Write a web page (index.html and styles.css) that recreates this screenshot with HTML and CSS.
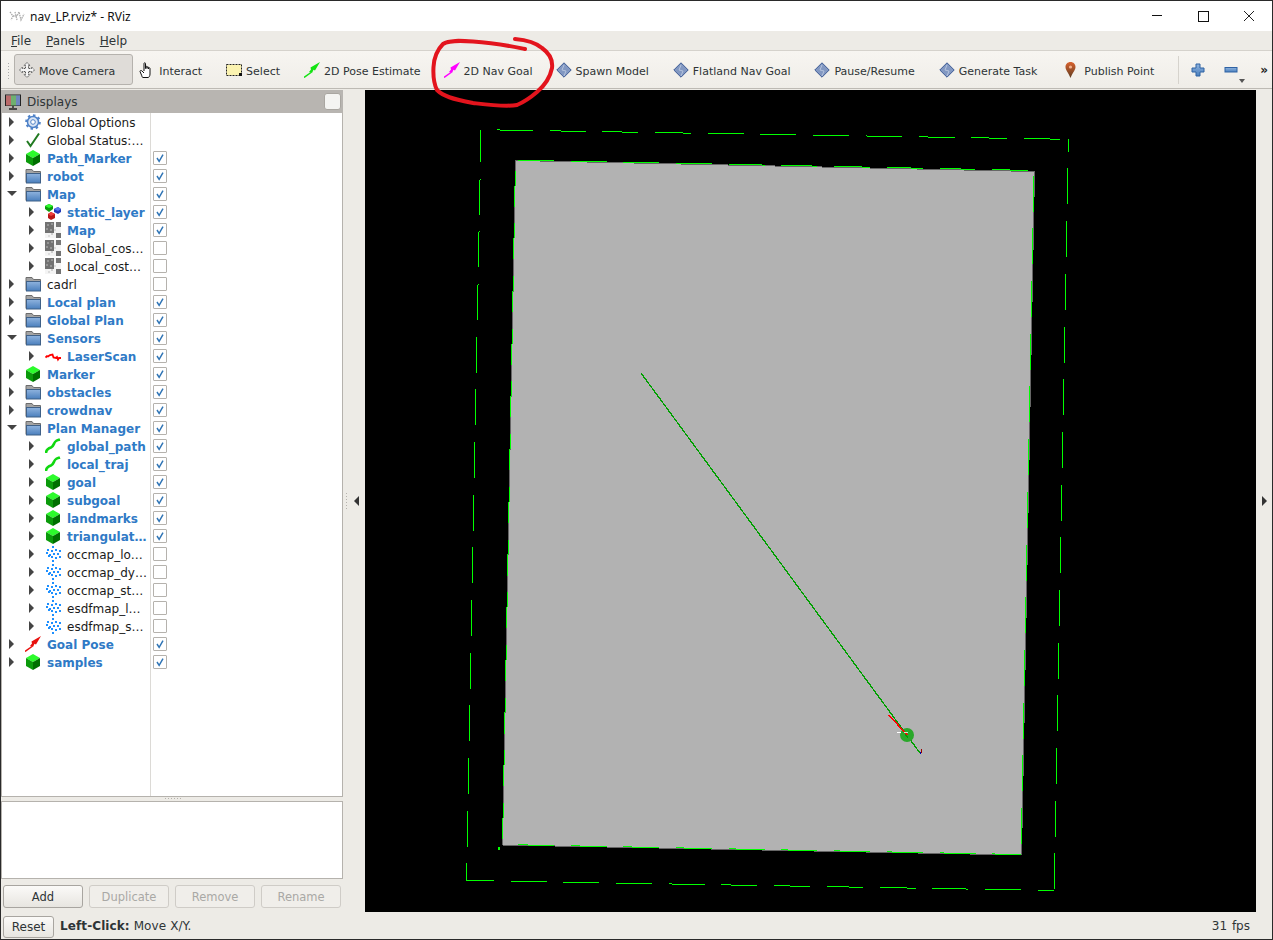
FILE: index.html
```html
<!DOCTYPE html>
<html lang="en">
<head>
	<meta charset="UTF-8">
	<title>nav_LP.rviz* - RViz</title>
	<link rel="stylesheet" href="styles.css">
</head>
<body>
	<svg class="defs" width="0" height="0">
		<defs>
			<linearGradient id="blue" x1="0" y1="0" x2="0" y2="1"><stop offset="0" stop-color="#8fb3de"/><stop offset="1" stop-color="#4a7fbd"/></linearGradient>
			<linearGradient id="pinfill" x1="0" y1="0" x2="0" y2="1"><stop offset="0" stop-color="#d9622e"/><stop offset="1" stop-color="#5f3d22"/></linearGradient>
			<symbol id="cube" viewBox="0 0 16 16"><polygon points="8,0 15,4 8,8 1,4" fill="#2cfb2c"/><polygon points="1,4 8,8 8,16 1,12" fill="#0b9a0b"/><polygon points="15,4 8,8 8,16 15,12" fill="#006f00"/></symbol>
			<symbol id="folder" viewBox="0 0 16 16"><path d="M1 1.500h6l1.500 2h7v11H1z" fill="#a3a3a3" stroke="#6c6c6c"/><rect x="1.500" y="5.500" width="14" height="9.500" fill="url(#blue)" stroke="#3f6087"/></symbol>
			<symbol id="gear" viewBox="0 0 16 16"><circle cx="8" cy="8" r="5.500" fill="#dbe6f5" stroke="#4f82c8" stroke-width="1.500"/><circle cx="8" cy="8" r="6.800" fill="none" stroke="#4f82c8" stroke-width="2" stroke-dasharray="2.500 2.800"/><circle cx="8" cy="8" r="2.300" fill="#fff" stroke="#4f82c8"/></symbol>
			<symbol id="ok" viewBox="0 0 16 16"><path d="M2 9l3.500 5L14 1.500" fill="none" stroke="#217a21" stroke-width="2"/></symbol>
			<symbol id="cubes" viewBox="0 0 16 16"><polygon points="4,0 8,2 8,5 4,8 0,5 0,2" fill="#0c9c0c"/><polygon points="4,0 8,2 4,4 0,2" fill="#2cfb2c"/><polygon points="13,3 16,5 16,8 13,10 9,8 9,5" fill="#2339b8"/><polygon points="13,3 16,5 13,7 9,5" fill="#5a78f0"/><polygon points="6,8 10,10 10,14 6,16 3,14 3,10" fill="#b81616"/><polygon points="6,8 10,10 6,12 3,10" fill="#f04040"/></symbol>
			<symbol id="map" viewBox="0 0 16 16"><rect width="16" height="16" fill="#f4f4f4"/><rect width="9" height="11" fill="#727272"/><rect x="2" y="2" width="2" height="2" fill="#969696"/><rect x="6" y="1" width="2" height="2" fill="#969696"/><rect x="1" y="6" width="2" height="2" fill="#969696"/><rect x="5" y="7" width="2" height="2" fill="#969696"/><rect x="11" width="5" height="5" fill="#777"/><rect x="11" y="11" width="5" height="5" fill="#727272"/><rect x="6" y="11" width="2" height="2" fill="#cfcfcf"/><rect x="3" y="13" width="2" height="2" fill="#dcdcdc"/><rect x="9" y="7" width="2" height="2" fill="#dcdcdc"/></symbol>
			<symbol id="scan" viewBox="0 0 16 16"><path d="M0.500 9.500L2 8l1 .5L5 7l2.500-.5 1 3 2.500.5 1-1 1 2.500 1-1.500H16" fill="none" stroke="#f00" stroke-width="1.800"/></symbol>
			<symbol id="path" viewBox="0 0 16 16"><path d="M1 15c0-3 2-4.500 5-5.500 3-1 2.500-5 5-6.500 1.200-.8 2.500-1 4-1.500" fill="none" stroke="#10d810" stroke-width="2.600"/></symbol>
			<symbol id="dots" viewBox="0 0 16 16"><g fill="#1e90ff"><rect x="7" y="0" width="2" height="2"/><rect x="2" y="3" width="2" height="2"/><rect x="6" y="4" width="2" height="2"/><rect x="10" y="3" width="2" height="2"/><rect x="14" y="4" width="2" height="2"/><rect x="1" y="6" width="2" height="2"/><rect x="4" y="8" width="2" height="2"/><rect x="8" y="7" width="2" height="2"/><rect x="12" y="7" width="2" height="2"/><rect x="3" y="9" width="2" height="2"/><rect x="6" y="10" width="2" height="2"/><rect x="14" y="10" width="2" height="2"/><rect x="10" y="11" width="2" height="2"/><rect x="7" y="14" width="2" height="2"/></g></symbol>
			<symbol id="arrow" viewBox="0 0 16 16"><path d="M0 15.500L7 10.500" fill="none" stroke="currentColor" stroke-width="1.500"/><polygon points="16,0 11,8.500 9.500,7.800 8,11 5,10 7,7.500 6.500,5.500" fill="currentColor"/></symbol>
			<symbol id="diamond" viewBox="0 0 16 16"><polygon points="8,0.800 15.200,8 8,15.200 0.800,8" fill="#8298c2" stroke="#3d5a94"/><path d="M8 3l-2 5 4 1-2 5" fill="none" stroke="#b5c3dd"/></symbol>
			<symbol id="pin" viewBox="0 0 16 16"><path d="M8 0c3 0 5 2.200 5 5 0 3-3 6-5 11-2-5-5-8-5-11 0-2.800 2-5 5-5z" fill="url(#pinfill)"/><circle cx="8" cy="5" r="1.600" fill="#f3b08c"/></symbol>
			<symbol id="tick" viewBox="0 0 14 14"><path d="M3.500 7l2.500 4L10.500 3" fill="none" stroke="#2f74b5" stroke-width="1.700"/></symbol>
		</defs>
	</svg>

	<div class="window">
		<div class="titlebar">
			<svg class="appicon" viewBox="0 0 16 12"><path d="M1 2l3 4-2 4M4 6h4l2-4 2 8 3-6M6 2l2 8" fill="none" stroke="#aaa" stroke-width="1.300" stroke-dasharray="1.500 .8"/></svg>
			<span class="title">nav_LP.rviz* - RViz</span>
			<div class="winbtns">
				<svg viewBox="0 0 12 12"><path d="M1 5.500h10" stroke="#111" fill="none"/></svg>
				<svg viewBox="0 0 12 12"><rect x="1.500" y="1.500" width="10" height="10" stroke="#111" fill="none"/></svg>
				<svg viewBox="0 0 12 12"><path d="M1 1l10 10M11 1L1 11" stroke="#222" fill="none"/></svg>
			</div>
		</div>

		<div class="menubar">
			<span><u>F</u>ile</span>
			<span><u>P</u>anels</span>
			<span><u>H</u>elp</span>
		</div>

		<div class="toolbar">
			<div class="grip"></div>
			<div class="tool active">
				<svg class="ico" viewBox="0 0 16 16"><path d="M8 .5l3 3H9.500v3h3V5l3 3-3 3V9.500h-3v3H11l-3 3-3-3h1.500v-3h-3V11l-3-3 3-3v1.500h3v-3H5z" fill="#f4f4f4" stroke="#555" stroke-dasharray="1.500 .7"/></svg>
				<span>Move Camera</span>
			</div>
			<div class="tool">
				<svg class="ico" viewBox="0 0 16 16"><path d="M5 9V1.500c0-1 1.500-1 1.500 0V6.500 5c0-1 1.500-1 1.500 0v1.500-1c0-1 1.500-1 1.500 0v1.500-.5c0-1 1.500-1 1.500 0V12c0 2-1 3.500-2 3.500H4c-1 0-1-1.500-1.500-2.500L1 9.500c0-1 1-1.500 2-.5l2 2" fill="#fff" stroke="#111" stroke-width="1"/></svg>
				<span>Interact</span>
			</div>
			<div class="tool">
				<svg class="ico" viewBox="0 0 16 16"><rect x=".5" y="2.500" width="15" height="11" fill="#fbf3b0" stroke="#222" stroke-dasharray="2 1"/><rect x="13" y="11" width="3" height="3" fill="#111"/></svg>
				<span>Select</span>
			</div>
			<div class="tool">
				<svg class="ico pose-green"><use href="#arrow"/></svg>
				<span>2D Pose Estimate</span>
			</div>
			<div class="tool tight">
				<svg class="ico pose-pink"><use href="#arrow"/></svg>
				<span>2D Nav Goal</span>
			</div>
			<div class="tool tight"><svg class="ico"><use href="#diamond"/></svg><span>Spawn Model</span></div>
			<div class="tool"><svg class="ico"><use href="#diamond"/></svg><span>Flatland Nav Goal</span></div>
			<div class="tool"><svg class="ico"><use href="#diamond"/></svg><span>Pause/Resume</span></div>
			<div class="tool"><svg class="ico"><use href="#diamond"/></svg><span>Generate Task</span></div>
			<div class="tool"><svg class="ico pin-ico"><use href="#pin"/></svg><span>Publish Point</span></div>
			<div class="tool-sep"></div>
			<svg class="ico zoom-ico" viewBox="0 0 16 16"><path d="M6 2h4v4h4v4h-4v4H6v-4H2V6h4z" fill="url(#blue)" stroke="#2f62a3"/></svg>
			<div class="minus-wrap">
				<svg class="ico" viewBox="0 0 16 16"><rect x="2" y="5.500" width="12" height="4.500" fill="url(#blue)" stroke="#2f62a3"/></svg>
				<i class="drop"></i>
			</div>
			<span class="more">»</span>
		</div>

		<div class="main">
			<div class="side">
				<div class="panel-head">
					<svg class="ico" viewBox="0 0 16 16"><rect x=".5" y="1" width="15" height="10.500" fill="#8aa" stroke="#222"/><rect x="1" y="1.500" width="5" height="10" fill="#b96a6a"/><rect x="6" y="1.500" width="5" height="10" fill="#6fb06f"/><rect x="11" y="1.500" width="4" height="10" fill="#6f86bf"/><path d="M8 12v2M4 15h8" stroke="#222" stroke-width="1.400"/></svg>
					<span class="panel-name">Displays</span>
					<span class="head-box"></span>
				</div>
				<div class="tree">
					<div class="row"><div class="name"><i class="tw"></i><svg class="ico"><use href="#gear"/></svg><span>Global Options</span></div><div class="cell"></div></div>
					<div class="row"><div class="name"><i class="tw"></i><svg class="ico"><use href="#ok"/></svg><span>Global Status:…</span></div><div class="cell"></div></div>
					<div class="row"><div class="name"><i class="tw"></i><svg class="ico"><use href="#cube"/></svg><span class="on">Path_Marker</span></div><div class="cell"><span class="box"><svg><use href="#tick"/></svg></span></div></div>
					<div class="row"><div class="name"><i class="tw"></i><svg class="ico"><use href="#folder"/></svg><span class="on">robot</span></div><div class="cell"><span class="box"><svg><use href="#tick"/></svg></span></div></div>
					<div class="row"><div class="name"><i class="tw open"></i><svg class="ico"><use href="#folder"/></svg><span class="on">Map</span></div><div class="cell"><span class="box"><svg><use href="#tick"/></svg></span></div></div>
					<div class="row"><div class="name sub"><i class="tw"></i><svg class="ico"><use href="#cubes"/></svg><span class="on">static_layer</span></div><div class="cell"><span class="box"><svg><use href="#tick"/></svg></span></div></div>
					<div class="row"><div class="name sub"><i class="tw"></i><svg class="ico"><use href="#map"/></svg><span class="on">Map</span></div><div class="cell"><span class="box"><svg><use href="#tick"/></svg></span></div></div>
					<div class="row"><div class="name sub"><i class="tw"></i><svg class="ico"><use href="#map"/></svg><span>Global_cos…</span></div><div class="cell"><span class="box"></span></div></div>
					<div class="row"><div class="name sub"><i class="tw"></i><svg class="ico"><use href="#map"/></svg><span>Local_cost…</span></div><div class="cell"><span class="box"></span></div></div>
					<div class="row"><div class="name"><i class="tw"></i><svg class="ico"><use href="#folder"/></svg><span>cadrl</span></div><div class="cell"><span class="box"></span></div></div>
					<div class="row"><div class="name"><i class="tw"></i><svg class="ico"><use href="#folder"/></svg><span class="on">Local plan</span></div><div class="cell"><span class="box"><svg><use href="#tick"/></svg></span></div></div>
					<div class="row"><div class="name"><i class="tw"></i><svg class="ico"><use href="#folder"/></svg><span class="on">Global Plan</span></div><div class="cell"><span class="box"><svg><use href="#tick"/></svg></span></div></div>
					<div class="row"><div class="name"><i class="tw open"></i><svg class="ico"><use href="#folder"/></svg><span class="on">Sensors</span></div><div class="cell"><span class="box"><svg><use href="#tick"/></svg></span></div></div>
					<div class="row"><div class="name sub"><i class="tw"></i><svg class="ico"><use href="#scan"/></svg><span class="on">LaserScan</span></div><div class="cell"><span class="box"><svg><use href="#tick"/></svg></span></div></div>
					<div class="row"><div class="name"><i class="tw"></i><svg class="ico"><use href="#cube"/></svg><span class="on">Marker</span></div><div class="cell"><span class="box"><svg><use href="#tick"/></svg></span></div></div>
					<div class="row"><div class="name"><i class="tw"></i><svg class="ico"><use href="#folder"/></svg><span class="on">obstacles</span></div><div class="cell"><span class="box"><svg><use href="#tick"/></svg></span></div></div>
					<div class="row"><div class="name"><i class="tw"></i><svg class="ico"><use href="#folder"/></svg><span class="on">crowdnav</span></div><div class="cell"><span class="box"><svg><use href="#tick"/></svg></span></div></div>
					<div class="row"><div class="name"><i class="tw open"></i><svg class="ico"><use href="#folder"/></svg><span class="on">Plan Manager</span></div><div class="cell"><span class="box"><svg><use href="#tick"/></svg></span></div></div>
					<div class="row"><div class="name sub"><i class="tw"></i><svg class="ico"><use href="#path"/></svg><span class="on">global_path</span></div><div class="cell"><span class="box"><svg><use href="#tick"/></svg></span></div></div>
					<div class="row"><div class="name sub"><i class="tw"></i><svg class="ico"><use href="#path"/></svg><span class="on">local_traj</span></div><div class="cell"><span class="box"><svg><use href="#tick"/></svg></span></div></div>
					<div class="row"><div class="name sub"><i class="tw"></i><svg class="ico"><use href="#cube"/></svg><span class="on">goal</span></div><div class="cell"><span class="box"><svg><use href="#tick"/></svg></span></div></div>
					<div class="row"><div class="name sub"><i class="tw"></i><svg class="ico"><use href="#cube"/></svg><span class="on">subgoal</span></div><div class="cell"><span class="box"><svg><use href="#tick"/></svg></span></div></div>
					<div class="row"><div class="name sub"><i class="tw"></i><svg class="ico"><use href="#cube"/></svg><span class="on">landmarks</span></div><div class="cell"><span class="box"><svg><use href="#tick"/></svg></span></div></div>
					<div class="row"><div class="name sub"><i class="tw"></i><svg class="ico"><use href="#cube"/></svg><span class="on">triangulat…</span></div><div class="cell"><span class="box"><svg><use href="#tick"/></svg></span></div></div>
					<div class="row"><div class="name sub"><i class="tw"></i><svg class="ico"><use href="#dots"/></svg><span>occmap_lo…</span></div><div class="cell"><span class="box"></span></div></div>
					<div class="row"><div class="name sub"><i class="tw"></i><svg class="ico"><use href="#dots"/></svg><span>occmap_dy…</span></div><div class="cell"><span class="box"></span></div></div>
					<div class="row"><div class="name sub"><i class="tw"></i><svg class="ico"><use href="#dots"/></svg><span>occmap_st…</span></div><div class="cell"><span class="box"></span></div></div>
					<div class="row"><div class="name sub"><i class="tw"></i><svg class="ico"><use href="#dots"/></svg><span>esdfmap_l…</span></div><div class="cell"><span class="box"></span></div></div>
					<div class="row"><div class="name sub"><i class="tw"></i><svg class="ico"><use href="#dots"/></svg><span>esdfmap_s…</span></div><div class="cell"><span class="box"></span></div></div>
					<div class="row"><div class="name"><i class="tw"></i><svg class="ico pose-red"><use href="#arrow"/></svg><span class="on">Goal Pose</span></div><div class="cell"><span class="box"><svg><use href="#tick"/></svg></span></div></div>
					<div class="row"><div class="name"><i class="tw"></i><svg class="ico"><use href="#cube"/></svg><span class="on">samples</span></div><div class="cell"><span class="box"><svg><use href="#tick"/></svg></span></div></div>
					<div class="row filler"><div class="name"></div><div class="cell"></div></div>
				</div>
				<div class="handle"></div>
				<div class="desc"></div>
				<div class="side-btns">
					<button class="btn">Add</button>
					<button class="btn off">Duplicate</button>
					<button class="btn off">Remove</button>
					<button class="btn off">Rename</button>
				</div>
			</div>

			<div class="split"><i class="grip-v"></i><i class="tri-left"></i></div>

			<svg class="view" viewBox="365 90 891 822" width="891" height="822" shape-rendering="crispEdges">
				<rect x="365" y="90" width="891" height="822" fill="#000"/>
				<polygon class="map-fill" points="515.500,160.500 1034.500,171.500 1021.500,855 502.500,845"/>
				<!-- walls: dashes run round both rectangles -->
				<line class="wall d1" x1="481" y1="129.700" x2="1068.500" y2="139.300"/>
				<line class="wall d2" x1="1068.500" y1="139.300" x2="1054" y2="891"/>
				<line class="wall d3" x1="466" y1="880.500" x2="1054" y2="890.500"/>
				<line class="wall d4" x1="466.500" y1="880.500" x2="481" y2="129.700"/>
				<line class="wall d5" x1="515" y1="160" x2="1034.500" y2="170.500"/>
				<line class="wall d6" x1="1034" y1="171" x2="1021" y2="855"/>
				<line class="wall d7" x1="502" y1="844.500" x2="1021" y2="854.500"/>
				<line class="wall d8" x1="502.500" y1="845" x2="515.500" y2="160"/>
				<rect x="498" y="847" width="2" height="3" fill="#0f0"/>
				<!-- robot path and goal -->
				<line class="track" x1="641" y1="373" x2="920" y2="753"/>
				<circle cx="907" cy="735" r="7" fill="#2aa82a" shape-rendering="auto"/>
				<line class="track" x1="905" y1="734" x2="908" y2="738"/>
				<line class="heading" x1="889" y1="715" x2="907" y2="735"/>
				<rect x="897" y="732" width="4" height="1" fill="#fff"/>
				<rect x="904" y="732" width="4" height="1" fill="#cfe9cf"/>
				<rect x="921" y="749" width="1" height="4" fill="#900"/>
				<rect x="920" y="752" width="1" height="2" fill="#00a"/>
			</svg>

			<div class="split-r"><i class="tri-right"></i></div>
		</div>

		<div class="statusbar">
			<button class="btn reset">Reset</button>
			<span class="hint"><b>Left-Click:</b> Move X/Y.</span>
			<span class="fps">31 fps</span>
		</div>

		<!-- red marker scribble over the toolbar -->
		<svg class="scribble" viewBox="0 0 1273 940" width="1273" height="940"><path d="M525 49C510 46 497 43 473 41.500 460 40.500 449 40 443 44 437 50 434 58 433.500 67 433 76 434 84 437 90 443 96 452 99 473 103 490 105 505 107 517 105 524 102 530 98 537 92 544 86 550 78 552 68 553 60 549 53 542 48 535 42 527 40 515 39" fill="none" stroke="#e3141d" stroke-width="4" stroke-linecap="round"/></svg>
	</div>
</body>
</html>
```

FILE: styles.css
```css
*{
	margin:0;
	padding:0;
	box-sizing:border-box;
}
html,body{
	height:100%;
	overflow:hidden;
}
body{
	background-color:#edebe6;
	font-family:"DejaVu Sans",sans-serif;
	font-size:11.500px;
	color:#2e3436;
}
.defs{
	position:absolute;
}
.window{
	height:940px;
	display:flex;
	flex-direction:column;
	border:1px solid #2a2a2a;
	position:relative;
}
.ico{
	width:16px;
	height:16px;
	flex:none;
	display:block;
}
.pose-green{color:#13e313;}
.pose-pink{color:#f0f;}
.pose-red{color:#e8110e;}

/* title bar */
.titlebar{
	height:30px;
	background-color:#fff;
	display:flex;
	align-items:center;
	padding-left:8px;
	flex:none;
}
.appicon{
	width:16px;
	height:12px;
	margin-right:5px;
}
.title{
	font-family:"Noto Sans",sans-serif;
	font-size:12px;
	color:#111;
}
.winbtns{
	margin-left:auto;
	display:flex;
	gap:34px;
	padding-right:17px;
}
.winbtns svg{
	width:12px;
	height:12px;
	display:block;
}

/* menu */
.menubar{
	height:20px;
	flex:none;
	display:flex;
	align-items:center;
	gap:15px;
	padding-left:10px;
	font-size:12px;
	background-color:#edebe6;
	border-bottom:1px solid #d5d2cc;
}

/* toolbar */
.toolbar{
	height:38px;
	flex:none;
	display:flex;
	align-items:center;
	padding:0 0 0 13px;
	background:linear-gradient(#f7f5f1,#efede8);
	border-bottom:1px solid #bdbab4;
	white-space:nowrap;
}
.grip{
	position:absolute;
	left:6px;
	top:61px;
	width:4px;
	height:18px;
	background-image:radial-gradient(#aaa 35%,transparent 40%);
	background-size:3px 3px;
}
.tool{
	height:31px;
	display:flex;
	align-items:center;
	gap:4px;
	padding:0 17px 0 5px;
	border:1px solid transparent;
	border-radius:3px;
	font-size:11px;
}
.tool.tight{
	margin-left:-1px;
}
.tool span{
	padding-top:4px;
}
.tool.active{
	background-color:#dfdcd8;
	border-color:#b5b2ad;
	padding-left:4px;
}
.pin-ico{
	width:19px;
}
.tool-sep{
	width:1px;
	height:28px;
	background-color:#d6d3cd;
	margin:0 11px 0 6px;
}
.zoom-ico{
	margin-right:17px;
}
.minus-wrap{
	position:relative;
	width:30px;
}
.drop{
	position:absolute;
	left:16px;
	top:17px;
	border:3px solid transparent;
	border-top:4px solid #555;
	border-bottom:0;
}
.more{
	font-size:12px;
	font-weight:bold;
	color:#222;
	margin-left:7px;
}

/* main area */
.main{
	flex:1;
	display:flex;
	min-height:0;
	padding-top:1px;
}
.side{
	width:342px;
	flex:none;
	display:flex;
	flex-direction:column;
}
.panel-head{
	height:23px;
	flex:none;
	background-color:#b8b5b1;
	display:flex;
	align-items:center;
	gap:6px;
	padding:0 2px 0 4px;
	font-size:12px;
}
.panel-name{
	flex:1;
}
.head-box{
	width:17px;
	height:17px;
	background-color:#f4f4f2;
	border:1px solid #a9a6a1;
	border-radius:3px;
}
.tree{
	height:684px;
	flex:none;
	display:flex;
	flex-direction:column;
	background-color:#fff;
	border:1px solid #b5b2ad;
	border-top:0;
}
.row{
	height:18px;
	flex:none;
	display:flex;
}
.row.filler{
	flex:1;
}
.name{
	width:149px;
	flex:none;
	display:flex;
	align-items:center;
	padding-left:6px;
	border-right:1px solid #dcdad6;
	font-size:12px;
	color:#1a1a1a;
	white-space:nowrap;
	overflow:hidden;
}
.name.sub{
	padding-left:26px;
}
.name .ico{
	margin-right:6px;
}
.name span{
	padding-top:2px;
}
.name .on{
	color:#2f7ac6;
	font-weight:bold;
}
.tw{
	width:17px;
	flex:none;
	height:0;
	display:block;
	position:relative;
}
.tw::before{
	content:"";
	position:absolute;
	left:1px;
	top:-5px;
	border-style:solid;
	border-width:5px 0 5px 5px;
	border-color:transparent transparent transparent #444;
}
.tw.open::before{
	left:-1px;
	top:-3px;
	border-width:5px 5px 0 5px;
	border-color:#444 transparent transparent transparent;
}
.cell{
	flex:1;
	display:flex;
	align-items:center;
	padding-left:2px;
}
.box{
	width:14px;
	height:14px;
	background-color:#fff;
	border:1px solid #b5b2ad;
	border-radius:1px;
	display:block;
}
.box svg{
	width:12px;
	height:12px;
	display:block;
}
.handle{
	height:4px;
	flex:none;
	position:relative;
}
.handle::after{
	content:"";
	position:absolute;
	left:164px;
	top:1px;
	width:17px;
	height:1px;
	background-image:linear-gradient(90deg,#b5b2ad 50%,transparent 50%);
	background-size:3px 1px;
}
.desc{
	height:78px;
	flex:none;
	background-color:#fff;
	border:1px solid #b5b2ad;
}
.side-btns{
	display:flex;
	gap:6px;
	padding:6px 0 0 2px;
}
.btn{
	width:80px;
	height:23px;
	font-family:"DejaVu Sans",sans-serif;
	font-size:11.500px;
	color:#2e3436;
	background:linear-gradient(#fbfaf8,#e7e5e0);
	border:1px solid #a8a5a0;
	border-radius:3px;
}
.btn.off{
	color:#a9a8a5;
	background:#f0eeea;
	border-color:#cfccc7;
}
.split{
	width:22px;
	flex:none;
	display:flex;
	align-items:center;
	gap:7px;
	padding-left:3px;
}
.grip-v{
	width:1px;
	height:16px;
	background-image:linear-gradient(#b5b2ad 50%,transparent 50%);
	background-size:1px 3px;
}
.tri-left{
	border-style:solid;
	border-width:5px 5px 5px 0;
	border-color:transparent #333 transparent transparent;
}
.view{
	display:block;
	flex:none;
}
.map-fill{
	fill:#b2b2b2;
	stroke:#666;
}
.wall{
	stroke:#0f0;
	stroke-width:1;
	stroke-dasharray:36 16.700;
}
.d1{stroke-dashoffset:36.700;}
.d2{stroke-dashoffset:23.500;}
.d3{stroke-dashoffset:8;}
.d4{stroke-dashoffset:19;}
.d5{stroke-dashoffset:49.700;}
.d6{stroke-dashoffset:48;}
.d7{stroke-dashoffset:36.700;}
.d8{stroke-dashoffset:46.700;}
.track{
	stroke:#00a000;
	stroke-width:1.300;
}
.heading{
	stroke:#f00;
	stroke-width:1.500;
}
.split-r{
	flex:1;
	display:flex;
	align-items:center;
	justify-content:center;
}
.tri-right{
	border-style:solid;
	border-width:5px 0 5px 5px;
	border-color:transparent transparent transparent #333;
}

/* status bar */
.statusbar{
	height:27px;
	flex:none;
	display:flex;
	align-items:center;
	padding:0 22px 0 2px;
	font-size:12px;
}
.btn.reset{
	width:51px;
	height:22px;
	margin-top:2px;
	font-size:12px;
}
.hint{
	margin-left:6px;
	letter-spacing:.1px;
}
.fps{
	margin-left:auto;
	font-size:12px;
	word-spacing:1px;
}
.scribble{
	position:absolute;
	left:-1px;
	top:-1px;
	pointer-events:none;
}
```
